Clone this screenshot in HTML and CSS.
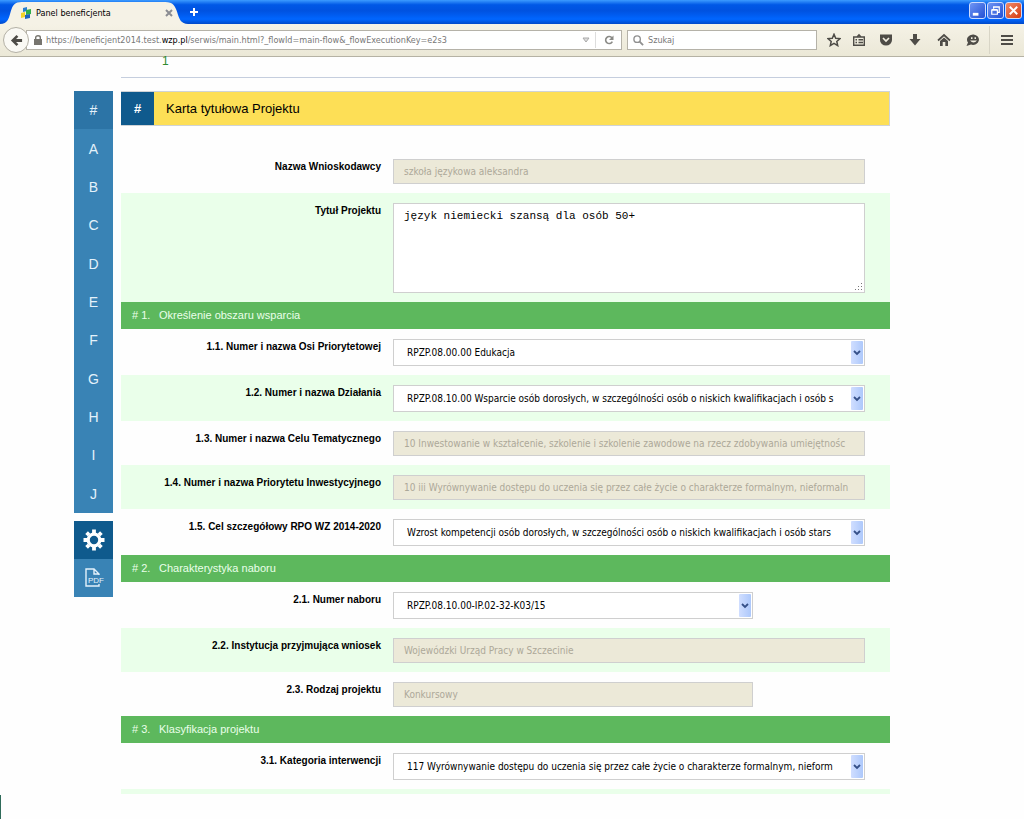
FILE: index.html
```html
<!DOCTYPE html>
<html lang="pl">
<head>
<meta charset="utf-8">
<title>Panel beneficjenta</title>
<link rel="stylesheet" href="styles.css">
</head>
<body>
<header class="browser">
  <div class="titlebar">
    <div class="tab">
      <svg class="tab-shape" viewBox="0 0 190 24" preserveAspectRatio="none" aria-hidden="true"><path d="M0 24C8 24 9 18 11 11 13 5 15 2 22 2H167C175 2 177 6 179 12 181 19 183 24 190 24Z" fill="#f5f2e6"/></svg>
      <svg class="favicon" viewBox="0 0 12 12" aria-hidden="true"><path d="M3 1 7 0V4L3 5Z" fill="#2a7fd0"/><path d="M6 3 11 2V7L6 8Z" fill="#2fae4c"/><path d="M1 6 5 5V10L1 11Z" fill="#f3d32a"/><path d="M5 8 10 7V11L5 12Z" fill="#1c62c0"/></svg>
      <span class="tab-title">Panel beneficjenta</span>
      <button class="tab-close" aria-label="Zamknij kartę"><svg viewBox="0 0 8 8"><path d="M1 1 7 7M7 1 1 7" stroke="#8b8d93" stroke-width="2"/></svg></button>
    </div>
    <button class="tab-new" aria-label="Nowa karta"><svg viewBox="0 0 10 10"><path d="M5 1V9M1 5H9" stroke="#fff" stroke-width="2"/></svg></button>
    <div class="window-buttons">
      <button class="win" aria-label="Minimalizuj"><svg viewBox="0 0 16 16"><path d="M3 12H9" stroke="#fff" stroke-width="3"/></svg></button>
      <button class="win" aria-label="Przywróć"><svg viewBox="0 0 16 16"><path d="M6 6V4H12V10H10M6 4.500H12M4 7.500H10V12H4ZM4 7H10" fill="none" stroke="#fff" stroke-width="1.300"/></svg></button>
      <button class="win win-close" aria-label="Zamknij"><svg viewBox="0 0 16 16"><path d="M4 4 12 12M12 4 4 12" stroke="#fff" stroke-width="2"/></svg></button>
    </div>
  </div>
  <div class="toolbar">
    <button class="back" aria-label="Wstecz"><svg viewBox="0 0 14 14"><path d="M1 7 7 1 9 3 6.500 5.500H13V8.500H6.500L9 11 7 13Z" fill="#4e4c47"/></svg></button>
    <div class="address">
      <svg class="lock" viewBox="0 0 8 10"><path d="M0 4H8V10H0Z" fill="#77756f"/><path d="M1.700 4V2.500Q1.700.8 4 .8 6.300.8 6.300 2.500V4" fill="none" stroke="#77756f" stroke-width="1.400"/></svg>
      <div class="url">https://beneficjent2014.test.<b>wzp.pl</b>/serwis/main.html?_flowId=main-flow&amp;_flowExecutionKey=e2s3</div>
      <svg class="drop" viewBox="0 0 8 6"><path d="M1 1H7L4 5Z" fill="#ddd" stroke="#aaa"/></svg>
      <button class="reload" aria-label="Odśwież"><svg viewBox="0 0 10 10"><path d="M8 3A3.500 3.500 0 1 0 8.300 6.600" fill="none" stroke="#8a8a86" stroke-width="1.600"/><path d="M9.500.5V5H5Z" fill="#8a8a86"/></svg></button>
    </div>
    <div class="search">
      <svg viewBox="0 0 12 12"><circle cx="4.500" cy="4.500" r="3.500" fill="none" stroke="#909090" stroke-width="1.500"/><path d="M7 7 11 11" stroke="#909090" stroke-width="2"/></svg>
      <input class="search-input" type="text" placeholder="Szukaj" aria-label="Szukaj">
    </div>
    <nav class="tools" aria-label="Narzędzia">
      <button aria-label="Zakładka"><svg viewBox="0 0 14 14"><path d="M7 1.300 8.700 5.200 13 5.600 9.800 8.400 10.700 12.600 7 10.400 3.300 12.600 4.200 8.400 1 5.600 5.300 5.200Z" fill="none" stroke="#4e4c47" stroke-width="1.500"/></svg></button>
      <button class="tool-split" aria-label="Lista zakładek"><svg viewBox="0 0 14 14"><path d="M1.700 4H12.300V12.300H1.700ZM5 4 7 1.800 9 4M3.500 6.800H5M6.500 6.800H11M3.500 9.500H5M6.500 9.500H11" fill="none" stroke="#4e4c47" stroke-width="1.400"/></svg></button>
      <button aria-label="Pocket"><svg viewBox="0 0 14 14"><path d="M1 1.500H13V7A6 5.500 0 0 1 1 7Z" fill="#4e4c47"/><path d="M4 5 7 8 10 5" fill="none" stroke="#f2efe2" stroke-width="1.700"/></svg></button>
      <button aria-label="Pobrane"><svg viewBox="0 0 14 14"><path d="M5 1H9V6H12.500L7 12.500 1.500 6H5Z" fill="#4e4c47"/></svg></button>
      <button aria-label="Strona startowa"><svg viewBox="0 0 14 14"><path d="M1 7.500 7 2 13 7.500" fill="none" stroke="#4e4c47" stroke-width="1.700"/><path d="M3 8 7 4.500 11 8V13H8.300V9H5.700V13H3Z" fill="#4e4c47"/></svg></button>
      <button aria-label="Hello"><svg viewBox="0 0 14 14"><path d="M7.500 1.500A6 5.200 0 1 1 5 11.600L.5 13 2 9.500A6 5.200 0 0 1 7.500 1.500Z" fill="#4e4c47"/><path d="M4 7.500Q7.500 11.500 11 7.500ZM5 4.300H6.500V6H5ZM8.500 4.300H10V6H8.500Z" fill="#f2efe2"/></svg></button>
      <button class="menu" aria-label="Menu"><svg viewBox="0 0 14 14"><path d="M1 3H13M1 7H13M1 11H13" stroke="#4e4c47" stroke-width="2.200"/></svg></button>
    </nav>
  </div>
</header>

<main class="page">
  <div class="step"><span>1</span></div>
  <div class="layout">
    <aside class="side">
      <nav class="letters" aria-label="Sekcje">
        <a class="current" href="#karta">#</a><a href="#a">A</a><a href="#b">B</a><a href="#c">C</a><a href="#d">D</a><a href="#e">E</a><a href="#f">F</a><a href="#g">G</a><a href="#h">H</a><a href="#i">I</a><a href="#j">J</a>
      </nav>
      <div class="actions">
        <button class="action action-main" aria-label="Ustawienia"><svg viewBox="0 0 22 22"><circle cx="11" cy="11" r="5.800" fill="none" stroke="#fff" stroke-width="3.200"/><path d="M11 .5V4M11 18V21.500M.5 11H4M18 11H21.500M3.600 3.600 6 6M16 16 18.400 18.400M3.600 18.400 6 16M16 6 18.400 3.600" stroke="#fff" stroke-width="3.800"/></svg></button>
        <button class="action" aria-label="PDF"><svg viewBox="0 0 22 22"><path d="M16 8V7L11 2H3V19H16V17M11 2V7H16" fill="none" stroke="#e4f2fb" stroke-width="1.400"/><path d="M5 9H20V16H5Z" fill="#3983b5"/><text class="pdf" x="5" y="16">PDF</text></svg></button>
      </div>
    </aside>

    <form class="form">
      <h1 class="title" id="karta"><span class="title-mark">#</span><span class="title-text">Karta tytułowa Projektu</span></h1>

      <div class="row"><label for="f1">Nazwa Wnioskodawcy</label><input id="f1" class="field" type="text" disabled value="szkoła językowa aleksandra"></div>
      <div class="row tinted"><label for="f2">Tytuł Projektu</label><textarea id="f2" class="field area">język niemiecki szansą dla osób 50+</textarea></div>

      <h2 class="section"><span># 1.</span>Określenie obszaru wsparcia</h2>
      <div class="row"><label for="f11">1.1. Numer i nazwa Osi Priorytetowej</label><select id="f11" class="field"><option>RPZP.08.00.00 Edukacja</option></select></div>
      <div class="row tinted"><label for="f12">1.2. Numer i nazwa Działania</label><select id="f12" class="field"><option>RPZP.08.10.00 Wsparcie osób dorosłych, w szczególności osób o niskich kwalifikacjach i osób s</option></select></div>
      <div class="row"><label for="f13">1.3. Numer i nazwa Celu Tematycznego</label><input id="f13" class="field" type="text" disabled value="10 Inwestowanie w kształcenie, szkolenie i szkolenie zawodowe na rzecz zdobywania umiejętnośc"></div>
      <div class="row tinted"><label for="f14">1.4. Numer i nazwa Priorytetu Inwestycyjnego</label><input id="f14" class="field" type="text" disabled value="10 iii Wyrównywanie dostępu do uczenia się przez całe życie o charakterze formalnym, nieformaln"></div>
      <div class="row"><label for="f15">1.5. Cel szczegółowy RPO WZ 2014-2020</label><select id="f15" class="field"><option>Wzrost kompetencji osób dorosłych, w szczególności osób o niskich kwalifikacjach i osób stars</option></select></div>

      <h2 class="section"><span># 2.</span>Charakterystyka naboru</h2>
      <div class="row"><label for="f21">2.1. Numer naboru</label><select id="f21" class="field short"><option>RPZP.08.10.00-IP.02-32-K03/15</option></select></div>
      <div class="row tinted"><label for="f22">2.2. Instytucja przyjmująca wniosek</label><input id="f22" class="field" type="text" disabled value="Wojewódzki Urząd Pracy w Szczecinie"></div>
      <div class="row"><label for="f23">2.3. Rodzaj projektu</label><input id="f23" class="field short" type="text" disabled value="Konkursowy"></div>

      <h2 class="section"><span># 3.</span>Klasyfikacja projektu</h2>
      <div class="row"><label for="f31">3.1. Kategoria interwencji</label><select id="f31" class="field"><option>117 Wyrównywanie dostępu do uczenia się przez całe życie o charakterze formalnym, nieform</option></select></div>
      <div class="tail"></div>
    </form>
  </div>
</main>
<div class="edge"></div>
</body>
</html>
```
FILE: styles.css
```css
* { box-sizing: border-box; }
body { margin: 0; background: #fefefe; color: #000; font: 11px "Liberation Sans", Arial, sans-serif; }
button { border: 0; padding: 0; background: none; display: flex; align-items: center; justify-content: center; }
svg { display: block; }

/* Browser frame */
.browser { font: 9px "DejaVu Sans Condensed", Tahoma, sans-serif; border-bottom: 1px solid #b5b2a4; }
.titlebar { display: flex; align-items: center; height: 24px; background: linear-gradient(#3c9bff, #0058e6 20%, #0052e0 45%, #0066ff 80%, #0048c8); }
.tab { position: relative; display: flex; align-items: center; width: 188px; height: 24px; padding: 2px 15px 0 20px; }
.tab > * { position: relative; }
.tab .tab-shape { position: absolute; inset: 0; width: 100%; height: 100%; }
.favicon { width: 12px; height: 12px; }
.tab-title { flex: 1; padding-left: 4px; }
.tab-close svg { width: 8px; height: 8px; }
.tab-new { margin-left: 1px; }
.tab-new svg { width: 10px; height: 10px; }
.window-buttons { display: flex; gap: 1px; margin-left: auto; padding: 0 2px 4px 0; }
.win { width: 17px; height: 17px; border: 1px solid #cddcff; border-radius: 3px; background: linear-gradient(135deg, #6f95f4, #2350d4); }
.win svg { width: 15px; height: 15px; }
.win-close { background: linear-gradient(135deg, #f08a68, #d63c12); }
.toolbar { display: flex; align-items: center; height: 32px; padding: 0 1px 0 3px; background: linear-gradient(#f5f2e6, #ebe8d7); }
.back { position: relative; width: 26px; height: 26px; border: 1px solid #b3b0a5; border-radius: 50%; background: #faf9f4; }
.back svg { width: 13px; height: 13px; }
.address { display: flex; align-items: center; flex: 1; height: 20px; margin-left: -3px; padding-left: 7px; border: 1px solid #b5b2a8; background: #fff; }
.lock { width: 8px; height: 10px; }
.url { flex: 1; padding-left: 4px; color: #777; white-space: nowrap; overflow: hidden; }
.url b { color: #000; font-weight: normal; }
.drop { width: 8px; height: 6px; margin-right: 5px; }
.reload { width: 26px; height: 16px; border-left: 1px solid #ddd; }
.reload svg { width: 10px; height: 10px; }
.search { display: flex; align-items: center; gap: 4px; width: 190px; height: 20px; margin-left: 5px; padding-left: 5px; border: 1px solid #b5b2a8; background: #fff; }
.search svg { width: 11px; height: 11px; }
.search-input { width: 140px; border: 0; padding: 0; background: none; font: inherit; }
.search-input::placeholder { color: #777; }
.tools { display: flex; align-items: center; margin-left: 4px; }
.tools button { width: 29px; height: 28px; }
.tools button:first-child { width: 25px; }
.tools .tool-split { width: 25px; }
.tools .menu { width: 34px; margin-left: 2px; border-left: 1px solid #d8d5c6; }
.tools svg { width: 14px; height: 14px; }

/* Page */
.page { padding: 0 134px 0 74px; }
.step { height: 21px; margin-left: 47px; padding-left: 41px; border-bottom: 1px solid #c5cede; color: #2f8b2f; font-size: 12px; line-height: 9px; }
.layout { display: flex; align-items: flex-start; gap: 8px; padding-top: 13px; }
.side { display: flex; flex-direction: column; gap: 8px; width: 39px; }
.letters { display: flex; flex-direction: column; height: 422px; background: #3983b5; }
.letters a { display: flex; flex: 1; align-items: center; justify-content: center; color: #e4f2fb; font-size: 14px; text-decoration: none; }
.letters .current { background: #2c74a6; }
.action { width: 39px; height: 38px; background: #3983b5; }
.action-main { background: #0f5a8d; }
.action svg { width: 22px; height: 22px; }
.pdf { fill: #e4f2fb; font-size: 8px; }

.form { flex: 1; min-width: 0; }
.title { display: flex; align-items: stretch; height: 35px; margin: 0 0 23px; border: 1px solid #cfd3d6; border-left: 0; background: #fddf56; font-size: 13px; font-weight: normal; line-height: 33px; }
.title-mark { width: 33px; background: #0f5a8d; color: #fff; font-weight: bold; text-align: center; }
.title-text { padding-left: 12px; }
.row { display: flex; align-items: flex-start; gap: 12px; padding: 10px 25px 9px 0; }
.tinted { background: #eaffea; }
.row label { width: 260px; padding-top: 2px; font-size: 10px; font-weight: bold; line-height: 12px; text-align: right; }
.field { flex: 1; min-width: 0; height: 25px; margin: 0; padding: 0 11px 0 10px; border: 1px solid #cfcfcf; border-radius: 0; background: #fff; color: #000; font: 10px "DejaVu Sans Condensed", Tahoma, sans-serif; }
.field:disabled { background: #ece9d8; color: #aca899; }
.short { margin-right: 112px; }
.area { height: 90px; padding: 5px 10px; font: 11px/14px "Liberation Mono", "Courier New", monospace; }
.area::-webkit-resizer { background: url("data:image/svg+xml,%3Csvg xmlns='http://www.w3.org/2000/svg' width='10' height='10'%3E%3Cpath d='M7 1h1v1H7zM4 4h1v1H4zM7 4h1v1H7zM1 7h1v1H1zM4 7h1v1H4zM7 7h1v1H7z' fill='%23777'/%3E%3C/svg%3E") no-repeat right bottom; }
select.field { appearance: none; height: 27px; padding: 0 23px 0 13px; background: #fff url("data:image/svg+xml,%3Csvg xmlns='http://www.w3.org/2000/svg' width='12' height='23'%3E%3Cdefs%3E%3ClinearGradient id='g'%3E%3Cstop stop-color='%23d0deff'/%3E%3Cstop offset='1' stop-color='%23adc8fb'/%3E%3C/linearGradient%3E%3C/defs%3E%3Crect width='12' height='23' rx='1' fill='url(%23g)'/%3E%3Cpath d='M3 10l3 3 3-3' fill='none' stroke='%23355088' stroke-width='1.800'/%3E%3C/svg%3E") no-repeat right 1px center; }
.section { height: 27px; margin: 0; padding-left: 11px; background: #5db85d; color: #eaffea; font-size: 11px; font-weight: normal; line-height: 27px; }
.section span { display: inline-block; width: 27px; }
.tail { height: 5px; background: #eaffea; }
.edge { position: fixed; left: 0; bottom: 0; width: 1px; height: 24px; background: #2f6b5a; }
```
